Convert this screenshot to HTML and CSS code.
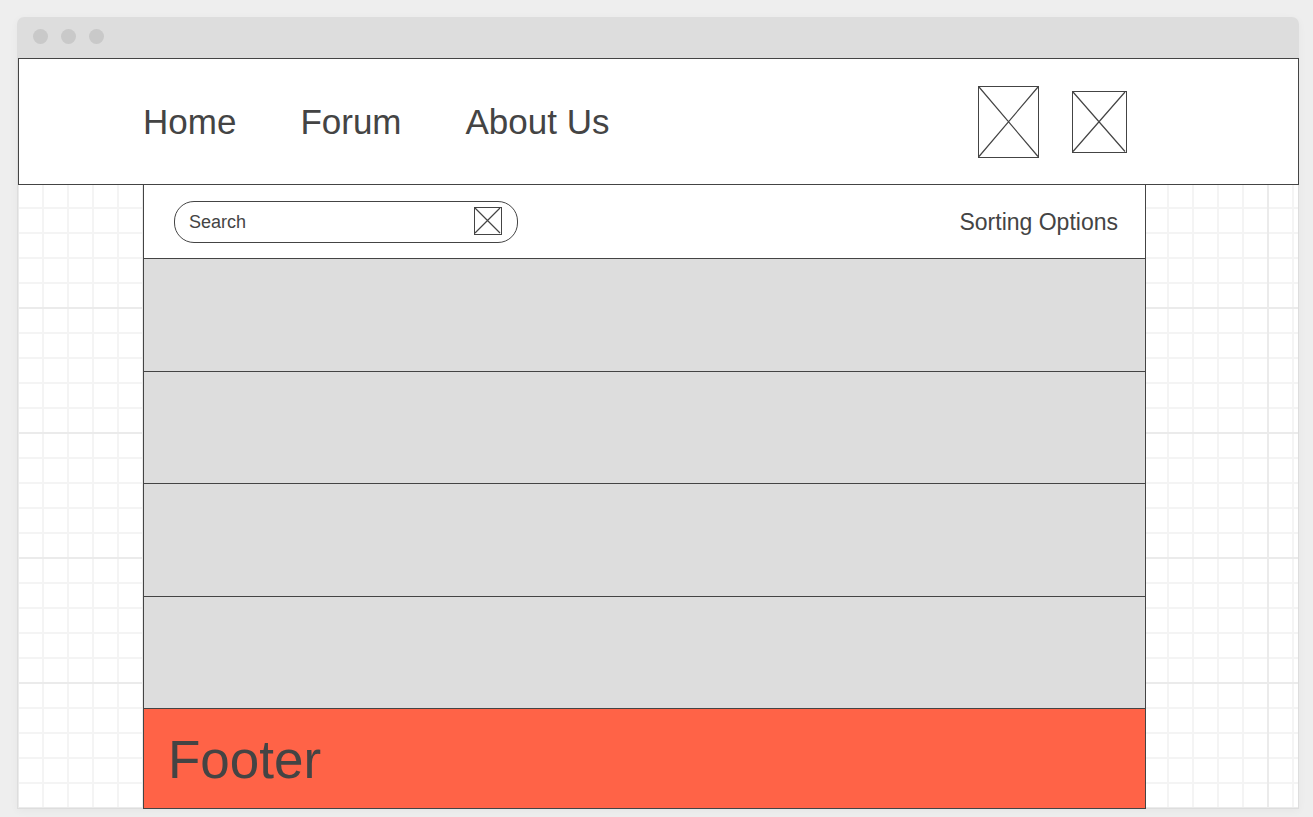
FILE: index.html
```html
<!DOCTYPE html>
<html lang="en">
<head>
  <meta charset="utf-8">
  <meta name="viewport" content="width=device-width, initial-scale=1">
  <title>Forum wireframe</title>
  <link rel="stylesheet" href="styles.css">
</head>
<body>
  <div class="window">
    <div class="titlebar">
      <span class="dot"></span>
      <span class="dot"></span>
      <span class="dot"></span>
    </div>
    <div class="canvas">
      <header class="header">
        <nav class="nav">
          <a class="nav-link" href="#home">Home</a>
          <a class="nav-link" href="#forum">Forum</a>
          <a class="nav-link" href="#about">About Us</a>
        </nav>
        <div class="actions">
          <button class="icon-button" type="button" aria-label="Notifications">
            <svg class="icon" width="61" height="72" viewBox="0 0 61 72"><rect x=".5" y=".5" width="60" height="71"/><path class="cross" d="M1 1L60 70.500M60 1L1 70.500"/></svg>
          </button>
          <button class="icon-button" type="button" aria-label="Profile">
            <svg class="icon" width="55" height="62" viewBox="0 0 55 62"><rect x=".5" y=".5" width="54" height="61"/><path class="cross" d="M1 1L53 60.500M53 1L1 60.500"/></svg>
          </button>
        </div>
      </header>
      <main class="content">
        <div class="toolbar">
          <form class="search">
            <input class="search-input" type="text" placeholder="Search" aria-label="Search">
            <button class="icon-button" type="button" aria-label="Submit search">
              <svg class="icon" width="28" height="28" viewBox="0 0 28 28"><rect x=".5" y=".5" width="27" height="27"/><path class="cross" d="M1 1L26 26M26 1L1 26"/></svg>
            </button>
          </form>
          <button class="sorting" type="button">Sorting Options</button>
        </div>
        <div class="posts">
          <article class="post"></article>
          <article class="post"></article>
          <article class="post"></article>
          <article class="post"></article>
        </div>
        <footer class="footer">Footer</footer>
      </main>
    </div>
  </div>
</body>
</html>
```
FILE: styles.css
```css
* {
  box-sizing: border-box;
}

body {
  margin: 0;
  padding: 17px 14px 8px 17px;
  background: #eee;
  color: #444;
  font-family: "Liberation Sans", Arial, sans-serif;
}

.window {
  border-radius: 7px 7px 0 0;
  box-shadow: 0 2px 8px rgba(0, 0, 0, 0.04);
}

.titlebar {
  display: flex;
  gap: 13px;
  height: 41px;
  padding: 12px 16px;
  background: #ddd;
  border-radius: 7px 7px 0 0;
}

.dot {
  width: 15px;
  height: 15px;
  border-radius: 50%;
  background: #c9c9c9;
}

.canvas {
  border: solid #ddd;
  border-width: 0 1px 1px;
  background-color: #fff;
  background-image:
    linear-gradient(to left, #ebebeb 2px, transparent 2px),
    linear-gradient(to top, #ebebeb 2px, transparent 2px),
    linear-gradient(to left, #f4f4f4 2px, transparent 2px),
    linear-gradient(to top, #f4f4f4 2px, transparent 2px);
  background-size: 125px 125px, 125px 125px, 25px 25px, 25px 25px;
  background-position: 1px 1px;
}

.header {
  display: flex;
  align-items: center;
  justify-content: space-between;
  height: 127px;
  margin-right: -1px;
  padding: 0 171px 0 124px;
  background: #fff;
  border: 1px solid #444;
}

.nav {
  display: flex;
  gap: 64px;
}

.nav-link {
  color: inherit;
  font-size: 35px;
  line-height: 40px;
  text-decoration: none;
}

.actions {
  display: flex;
  align-items: center;
  gap: 33px;
}

.icon-button {
  padding: 0;
  border: 0;
  background: none;
  cursor: pointer;
}

.icon {
  display: block;
  fill: none;
  stroke: #444;
  stroke-width: 1;
}

.cross {
  stroke-width: 1.2;
}

.content {
  margin: 0 152px -1px 125px;
  background: #fff;
  border: solid #444;
  border-width: 0 1px 1px;
}

.toolbar {
  display: flex;
  align-items: center;
  justify-content: space-between;
  padding: 16px 27px 15px 30px;
}

.search {
  display: flex;
  align-items: center;
  width: 344px;
  height: 42px;
  padding: 0 15px 2px 14px;
  border: 1px solid #444;
  border-radius: 20px;
}

.search-input {
  flex: 1;
  min-width: 0;
  padding: 2px 0 0;
  border: 0;
  outline: 0;
  background: none;
  color: #444;
  font: 18px/24px "Liberation Sans", Arial, sans-serif;
}

.search-input::placeholder {
  color: #444;
  opacity: 1;
}

.sorting {
  padding: 0;
  border: 0;
  background: none;
  color: #444;
  font: 23px/28px "Liberation Sans", Arial, sans-serif;
  cursor: pointer;
}

.posts {
  display: grid;
  grid-template-rows: 113px 112px 113px 112px;
}

.post {
  background: #ddd;
  border-top: 1px solid #444;
}

.footer {
  padding: 21px 24px 18px;
  background: #ff6347;
  border-top: 1px solid #444;
  font-size: 53px;
  line-height: 60px;
}
```
